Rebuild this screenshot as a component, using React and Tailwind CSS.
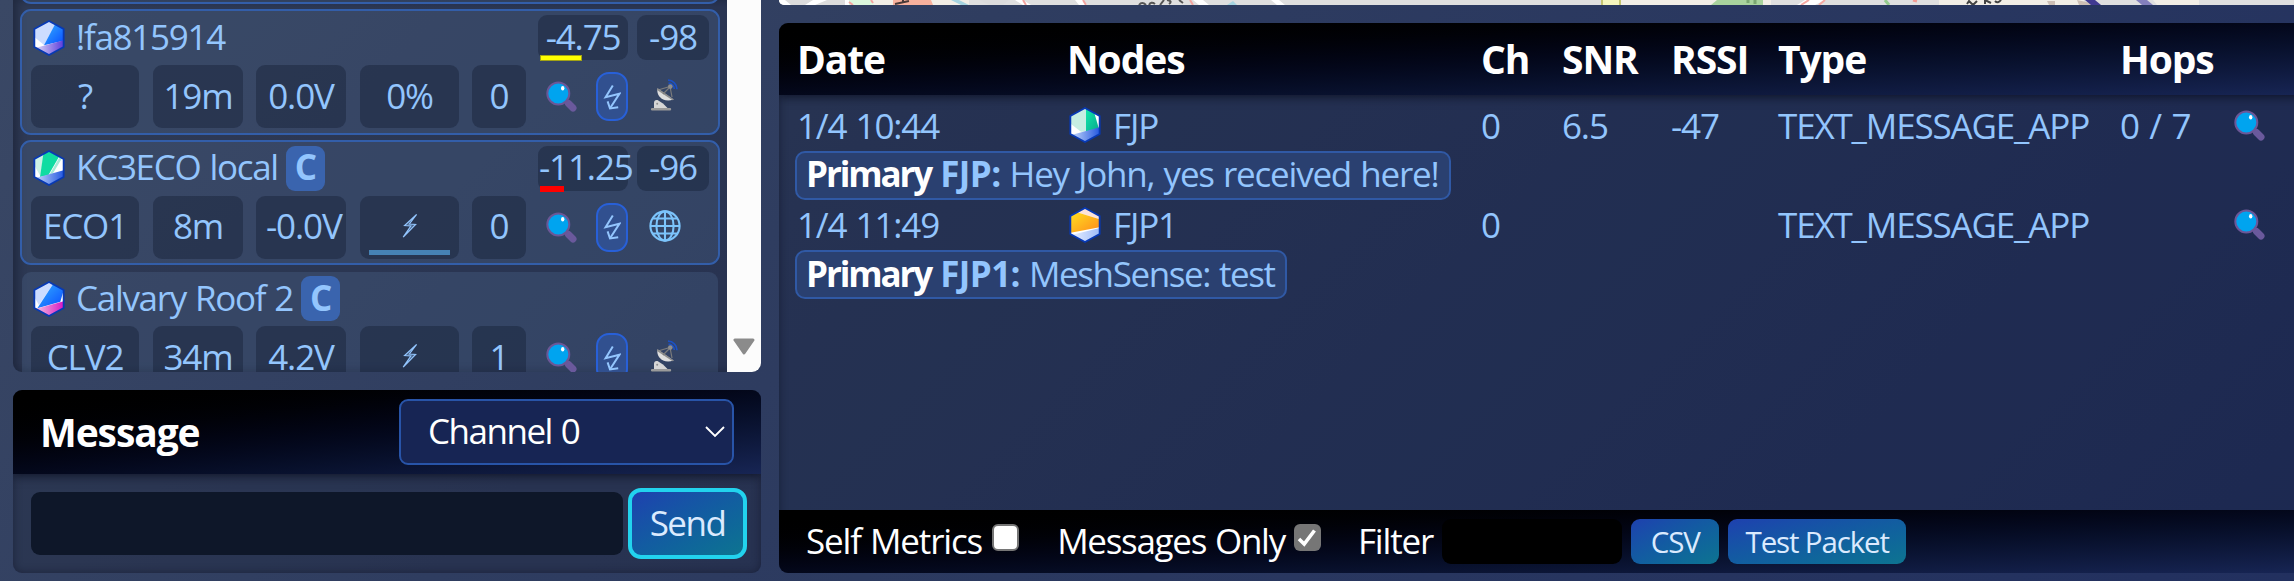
import React from "react";

const HEX = "M48 3 L92 27 V81 L48 105 L4 81 V27 Z";

const hexArt = {
  blue: (
    <>
      <path d="M48 4 L66 13 L34 76 L5 52 V28Z" fill="#ccdcff" />
      <path d="M66 13 L92 28 V62 L33 76Z" fill="url(#gBlue)" />
      <path d="M10 83 L92 61 V80 L48 104Z" fill="url(#gPurple)" />
    </>
  ),
  green: (
    <>
      <path d="M5 28 L33 13 L22 78 L5 48Z" fill="#cdf1e6" />
      <path d="M31 13 L48 4 L78 20 L46 76 L21 81Z" fill="#10dca2" />
      <path d="M80 21 L87 25 L60 70 L50 73Z" fill="#a9ead8" />
      <path d="M10 83 L92 61 V80 L48 104Z" fill="url(#gDeep)" />
    </>
  ),
  pink: (
    <>
      <path d="M48 4 L60 10 L18 72 L5 50 V28Z" fill="#ccdcff" />
      <path d="M60 10 L92 28 L82 62 L13 82Z" fill="url(#gBlue)" />
      <path d="M10 83 L92 61 V80 L48 104Z" fill="url(#gPink)" />
    </>
  ),
  mint: (
    <>
      <path d="M51 4 V74 L36 74 L5 50 V28Z" fill="#c6eee2" />
      <path d="M51 4 L76 18 L90 66 L51 74Z" fill="url(#gGreen)" />
      <path d="M10 83 L92 61 V80 L48 104Z" fill="url(#gDeep)" />
    </>
  ),
  orange: (
    <>
      <path d="M24 16 L48 4 L92 28 V37Z" fill="#fde3da" />
      <path d="M24 16 L92 37 V61 L5 77 V28Z" fill="url(#gOrange)" />
      <path d="M10 83 L92 63 V80 L48 104Z" fill="url(#gPale)" />
    </>
  ),
};

function Gradients() {
  const stops = [
    ["gBlue", "#2da0ff", "#0a4cff"],
    ["gPurple", "#c9c0f2", "#5a3bdc"],
    ["gDeep", "#a9c2f6", "#2457e0"],
    ["gPink", "#f0a6dc", "#d616c4"],
    ["gGreen", "#10e0a6", "#08a88c"],
    ["gOrange", "#ffd21f", "#ff8a1c"],
    ["gPale", "#dbe6ff", "#9fbcf8"],
  ];
  return (
    <svg width="0" height="0" className="absolute">
      <defs>
        {stops.map(([id, a, b]) => (
          <linearGradient key={id} id={id} x1="0" y1="0" x2="1" y2={id === "gBlue" || id === "gGreen" || id === "gOrange" ? "1" : "0"}>
            <stop offset="0.15" stopColor={a} />
            <stop offset="1" stopColor={b} />
          </linearGradient>
        ))}
      </defs>
    </svg>
  );
}

function Hex({ kind }) {
  return (
    <svg viewBox="0 0 96 108" className="h-9 w-8 shrink-0">
      <path d={HEX} fill="#fff" />
      {hexArt[kind]}
      <path d={HEX} fill="none" stroke="#0739b4" strokeWidth="5.5" strokeLinejoin="round" />
    </svg>
  );
}

function Magnifier() {
  return (
    <svg viewBox="0 0 31 31" className="h-[31px] w-[31px] shrink-0">
      <path d="M19 19 L22 22" stroke="#6b5797" strokeWidth="3" />
      <path d="M22.5 22.5 L27 27" stroke="#6a599c" strokeWidth="7" strokeLinecap="round" />
      <circle cx="12.3" cy="12.5" r="11" fill="#00a4ef" stroke="#6b5797" strokeWidth="2" />
      <ellipse cx="16.7" cy="7.3" rx="1.7" ry="2.3" fill="#fff" />
    </svg>
  );
}

function Zigzag() {
  return (
    <div className="flex h-[49px] w-8 items-center justify-center rounded-[13px] border-2 border-[#2860d8] bg-[#31508f]">
      <svg viewBox="0 0 18 28" className="h-7 w-[18px] shrink-0" fill="none" stroke="#93c5fd" strokeWidth="2">
        <path d="M9.8 2.5 L2.6 14.3 L16.4 10.8 L7.2 25" />
        <path d="M4.6 18.4 L7 25.5 L15.2 24.2" />
      </svg>
    </div>
  );
}

function Dish() {
  return (
    <svg viewBox="0 0 28 33" className="h-[33px] w-7 shrink-0">
      <path d="M17 1.2 a9 9 0 0 1 9 9 M17.5 4.2 a6 6 0 0 1 5.8 5.8" fill="none" stroke="#1c51c4" strokeWidth="1.7" />
      <path d="M7 11 L19 7.5 L21 18" fill="none" stroke="#7b7b7b" strokeWidth="1.2" />
      <path d="M6.5 9.5 C5 17 12 24 22.5 20.5Z" fill="#dedede" />
      <path d="M6.5 9 L23 20.5 L21.5 21.2 L6 11Z" fill="#8d8d8d" />
      <path d="M12 15 L19.5 7.5" stroke="#7b7b7b" strokeWidth="1.2" />
      <circle cx="19.3" cy="7.6" r="2.3" fill="#8d8d8d" />
      <path d="M3 29.5 V24 Q3 20.5 6.5 21 L12 24.5 L17 29.5Z" fill="#d6d6d6" />
      <circle cx="6.2" cy="24.7" r="1" fill="#8d8d8d" />
      <path d="M1 30.2 H19" stroke="#9a9a9a" strokeWidth="2.4" strokeLinecap="round" />
    </svg>
  );
}

function Globe() {
  return (
    <svg viewBox="0 0 32 32" className="h-8 w-8 shrink-0" fill="none" stroke="#7cc4fb" strokeWidth="2.1">
      <circle cx="16" cy="16" r="14.6" strokeWidth="2.1" />
      <ellipse cx="16" cy="16" rx="8.6" ry="14.6" />
      <path d="M16 1.5 V30.5 M1.5 16 H30.5 M4 8.5 H28 M4 23.5 H28" />
    </svg>
  );
}

function Bolt() {
  return (
    <svg viewBox="0 0 16 26" className="h-[26px] w-4 shrink-0" fill="none" stroke="#93c5fd" strokeWidth="1.2">
      <path d="M14.6 1.5 L2.6 12.6 L8.8 13 L1.2 24.2 L13.6 11.4 L7.4 11 Z" fill="#93c5fd" fillOpacity="0.3" />
    </svg>
  );
}

function Cell({ className, children }) {
  return (
    <div className={`flex shrink-0 items-center whitespace-nowrap rounded-[9px] bg-[#0f172a]/35 pb-[3px] ${className}`}>
      {children}
    </div>
  );
}

function NodeCard({ n }) {
  return (
    <div className={`flex h-[125.5px] shrink-0 flex-col gap-[5px] rounded-[11px] border-2 bg-[#93c5fd]/11 bg-clip-padding px-[9px] pt-1 ${n.active ? "border-[#335ea9]" : "border-transparent"}`}>
      <div className="flex h-[45px] items-center gap-[9px]">
        <div className="flex flex-1 items-center pl-0.5">
          <Hex kind={n.hex} />
          <span className="whitespace-nowrap pb-[3px] pl-[11px] tracking-[-1.3px]">{n.name}</span>
          {n.channel && (
            <span className="ml-2 flex h-[45px] w-[39px] items-center justify-center rounded-[9px] bg-[#3a64ae] pb-[3px] font-bold">C</span>
          )}
        </div>
        {n.snr && (
          <>
            <Cell className={`relative h-[45px] w-[90px] ${n.snrPos}`}>
              {n.snr}
              <span className={`absolute left-0.5 top-10 h-1.5 ${n.bar}`} />
            </Cell>
            <Cell className="h-[45px] w-[72px] justify-center">{n.rssi}</Cell>
          </>
        )}
      </div>
      <div className="flex h-[63px] items-center">
        <Cell className="h-[63px] w-[108px] justify-center">{n.short}</Cell>
        <Cell className="ml-3.5 h-[63px] w-[90px] justify-center">{n.age}</Cell>
        <Cell className={`ml-[13px] h-[63px] w-[90px] ${n.volt[0] === "-" ? "justify-start pl-[10px]" : "justify-center"}`}>{n.volt}</Cell>
        <Cell className="relative ml-3.5 h-[63px] w-[99px] justify-center">
          {n.pct || <Bolt />}
          {!n.pct && <span className="absolute bottom-1 left-[9px] h-[5px] w-[81px] bg-[#4682b4]" />}
        </Cell>
        <Cell className="ml-[13px] h-[63px] w-[54px] justify-center">{n.hops}</Cell>
        <div className="flex flex-1 items-center pl-5">
          <Magnifier />
          <div className="ml-[19px]"><Zigzag /></div>
          <div className="ml-[19px] flex w-9 justify-center pb-0.5">{n.icon === "globe" ? <Globe /> : <Dish />}</div>
        </div>
      </div>
    </div>
  );
}

const nodes = [
  { hex: "blue", name: "!fa815914", active: true, snr: "-4.75", snrPos: "justify-center", bar: "w-[42px] bg-[#ffff00] border border-[#a3a314]", rssi: "-98", short: "?", age: "19m", volt: "0.0V", pct: "0%", hops: "0", icon: "dish" },
  { hex: "green", name: "KC3ECO local", channel: true, active: true, snr: "-11.25", snrPos: "justify-start pl-px", bar: "w-6 bg-[#ff0000]", rssi: "-96", short: "ECO1", age: "8m", volt: "-0.0V", hops: "0", icon: "globe" },
  { hex: "pink", name: "Calvary Roof 2", channel: true, short: "CLV2", age: "34m", volt: "4.2V", hops: "1", icon: "dish" },
];

function NodeList() {
  return (
    <div className="flex h-[372px] overflow-hidden rounded-b-[9px] bg-[#1c2336]/35 shadow-[inset_4px_0_8px_rgba(10,14,30,0.4)]">
      <div className="flex w-[714px] flex-col gap-[5px] pl-[7px] pr-[7px]">
        <div className="-mt-[21px] h-[25px] shrink-0 rounded-[11px] border-2 border-[#335ea9] bg-[#93c5fd]/11" />
        {nodes.map((n) => (
          <NodeCard key={n.name} n={n} />
        ))}
      </div>
      <div className="flex w-[34px] items-end justify-center bg-[#fcfcfc] pb-[17px]">
        <svg viewBox="0 0 22 17" className="h-[17px] w-[22px]">
          <path d="M2 2 H20 L11 15 Z" fill="#8b8b8b" stroke="#8b8b8b" strokeWidth="3" strokeLinejoin="round" />
        </svg>
      </div>
    </div>
  );
}

function MessagePanel() {
  return (
    <div className="mt-[18px] flex h-[183px] flex-col overflow-hidden rounded-[9px] bg-[#1c2336]/35 shadow-[inset_0_0_9px_rgba(10,14,30,0.45)]">
      <div className="flex h-[84px] shrink-0 items-center justify-between bg-gradient-to-br from-black to-[#172554] pl-[27px] pr-[27px] text-white shadow-[0_2px_9px_rgba(10,14,30,0.8)]">
        <span className="pb-px text-[39px] font-bold tracking-[-1.1px]">Message</span>
        <div className="flex h-[66px] w-[335px] items-center justify-between rounded-[9px] border-2 border-[#2854a8] bg-[#172554] pl-[27px] pr-[7px]">
          <span className="pb-[3px] tracking-[-1.5px]">Channel 0</span>
          <svg viewBox="0 0 20 12" className="h-3 w-5" fill="none" stroke="#fff" strokeWidth="1.9">
            <path d="M1 1 L10 10 L19 1" />
          </svg>
        </div>
      </div>
      <div className="flex items-center pl-[18px] pt-[14px]">
        <div className="h-[63px] w-[592px] shrink-0 rounded-[9px] bg-[#0e1729]" />
        <button className="ml-[5px] flex h-[71px] w-[119px] items-center justify-center rounded-[13px] border-4 border-[#22d3ee] bg-gradient-to-br from-[#1e40af] to-[#0e7490] pb-[3px] tracking-[-1.5px] text-[#dbeafe]">
          Send
        </button>
      </div>
    </div>
  );
}

function MapStrip() {
  return (
    <svg viewBox="0 0 1515 5" preserveAspectRatio="none" className="h-[5px] w-[1515px] rounded-bl-[9px]">
      <rect width="1515" height="5" fill="#dfdfdf" />
      <path d="M0 0H70V5H0Z" fill="#fff" />
      <path d="M6 0H34L26 5H12Z M48 0H66L66 5H36Z" fill="#dcdcdc" />
      <path d="M70 0H92L96 5H70Z" fill="#dbf7dc" />
      <path d="M93 0H190V5H95Z" fill="#f2eee6" />
      <path d="M114 0H152L154 5H114Z" fill="#f7b19d" />
      <path d="M116 4L130 1M124 0V3" stroke="#4a3a38" strokeWidth="2" />
      <path d="M172 0L182 5H190L180 0Z" fill="#a6d4e0" />
      <path d="M200 0H230L224 5H210Z" fill="#dcdcdc" />
      <path d="M236 0H244L252 5H244Z M296 0H304L308 5H300Z M414 0H424L430 5H420Z M492 0H500L506 5H498Z" fill="#fff" />
      <path d="M70 2L74 5M92 0L94 3M244 0L247 5M304 0L307 5M411 0L414 5" stroke="#f3a5a0" strokeWidth="2" />
      <path d="M360 5q3-4 7 0M370 5q2-4 6-1M385 0L381 5M388 0q6 1 2 4M400 0L404 3" stroke="#555" strokeWidth="2" fill="none" />
      <path d="M448 5L454 1L458 5Z" fill="#a6d4e0" />
      <path d="M822 0H842V5H822Z" fill="#f5f6bd" />
      <path d="M823 0V5M841 0V5" stroke="#b5b558" strokeWidth="1.5" />
      <path d="M842 0H992V5H842Z" fill="#f2eee6" />
      <path d="M938 0H984V5H932Z" fill="#a9d39d" />
      <path d="M969 0V3M976 0V4" stroke="#7ba771" strokeWidth="3" />
      <path d="M1026 0H1046L1036 5H1018Z" fill="#fff" />
      <path d="M1030 0L1022 5M1046 0L1040 5" stroke="#f5a9a3" strokeWidth="2" />
      <path d="M1106 0L1110 5" stroke="#95cb8d" strokeWidth="3" />
      <path d="M1134 0L1138 1" stroke="#f39b93" strokeWidth="3" />
      <path d="M1160 0H1305V5H1160Z" fill="#f2eee6" />
      <path d="M1188 4L1190 1L1194 5L1198 1M1206 4V0L1212 3M1216 1q3 3 6-1" stroke="#444" strokeWidth="2" fill="none" />
      <path d="M1268 1H1276V5H1270Z M1298 0L1312 3V5H1300Z M1328 0L1336 5" fill="#cdbfb5" />
      <path d="M1306 0H1316L1322 5H1312Z" fill="#413a92" />
      <path d="M1357 0H1368L1374 5H1363Z" fill="#8480bd" />
      <path d="M1374 0H1420V5H1378Z" fill="#f2eee6" />
    </svg>
  );
}

const COLS = "grid grid-cols-[270px_414px_81px_109px_107px_342px_114px_auto] items-center pl-[18px]";

const packets = [
  { date: "1/4 10:44", hex: "mint", node: "FJP", ch: "0", snr: "6.5", rssi: "-47", type: "TEXT_MESSAGE_APP", hops: "0 / 7", text: "Hey John, yes received here!", track: "tracking-[-1.2px]" },
  { date: "1/4 11:49", hex: "orange", node: "FJP1", ch: "0", snr: "", rssi: "", type: "TEXT_MESSAGE_APP", hops: "", text: "MeshSense: test", track: "tracking-[-1.4px]" },
];

function Log() {
  return (
    <div className="mt-[18px] flex h-[550px] w-[1530px] flex-col overflow-hidden rounded-[9px] bg-[#10162b]/27 shadow-[inset_0_0_9px_rgba(10,14,30,0.5)]">
      <div className={`${COLS} h-[72px] shrink-0 bg-gradient-to-br from-black to-[#172554] pb-px text-[39px] font-bold tracking-[-1.1px] text-white shadow-[0_2px_9px_rgba(10,14,30,0.8)]`}>
        <span>Date</span>
        <span>Nodes</span>
        <span>Ch</span>
        <span>SNR</span>
        <span>RSSI</span>
        <span>Type</span>
        <span>Hops</span>
      </div>
      <div className="flex flex-1 flex-col items-start whitespace-nowrap pt-[5px]">
        {packets.map((p) => (
          <React.Fragment key={p.date}>
            <div className={`${COLS} h-[50.5px]`}>
              <span>{p.date}</span>
              <span className="flex items-center gap-3 pl-0.5">
                <Hex kind={p.hex} />
                <span>{p.node}</span>
              </span>
              <span>{p.ch}</span>
              <span>{p.snr}</span>
              <span>{p.rssi}</span>
              <span>{p.type}</span>
              <span className="[word-spacing:2.5px]">{p.hops}</span>
              <Magnifier />
            </div>
            <div className="ml-4 flex h-[49px] items-center rounded-[10px] border-2 border-[#3059a5] bg-[#2a4070] pb-[3px] pl-[9px] pr-[10px]">
              <b className="mr-[9px] tracking-[-2.1px] text-white">Primary</b>
              <b className="mr-[9px] tracking-[-0.6px]">{p.node}:</b>
              <span className={p.track}>{p.text}</span>
            </div>
          </React.Fragment>
        ))}
      </div>
      <div className="flex h-[63px] shrink-0 items-center whitespace-nowrap bg-gradient-to-br from-black to-[#172554] pl-[27px] text-white">
        <span className="pb-[3px]">Self Metrics</span>
        <span className="mb-2 ml-[10px] h-[27px] w-[27px] rounded-md border-2 border-[#767676] bg-white" />
        <span className="ml-[38px] pb-[3px] tracking-[-1.3px]">Messages Only</span>
        <span className="mb-2 ml-[9px] flex h-[27px] w-[27px] items-center justify-center rounded-md bg-[#767676]">
          <svg viewBox="0 0 20 20" className="h-5 w-5" fill="none" stroke="#fff" strokeWidth="3.6">
            <path d="M2 11 L7.2 16 L17.5 2.5" />
          </svg>
        </span>
        <span className="ml-[37px] pb-[3px]">Filter</span>
        <div className="ml-[9px] h-[45px] w-[180px] rounded-[9px] bg-black" />
        <button className="ml-[9px] flex h-[45px] w-[88px] items-center justify-center rounded-[9px] bg-gradient-to-br from-[#1e40af] to-[#0e7490] text-[29.5px] text-[#dbeafe]">CSV</button>
        <button className="ml-[9px] flex h-[45px] w-[178px] items-center justify-center rounded-[9px] bg-gradient-to-br from-[#1e40af] to-[#0e7490] text-[29.5px] text-[#dbeafe]">Test Packet</button>
      </div>
    </div>
  );
}

export default function App() {
  return (
    <div className="flex h-[581px] w-full overflow-hidden bg-[linear-gradient(135deg,#3a4865_0%,#2f3d60_35%,#22305f_100%)] pl-[13px] font-['Open_Sans',sans-serif] text-[35px] leading-none tracking-[-1.15px] text-[#93c5fd] [word-spacing:1.2px]">
      <Gradients />
      <div className="w-[748px] shrink-0">
        <NodeList />
        <MessagePanel />
      </div>
      <div className="ml-[18px] flex w-[1530px] shrink-0 flex-col">
        <MapStrip />
        <Log />
      </div>
    </div>
  );
}
